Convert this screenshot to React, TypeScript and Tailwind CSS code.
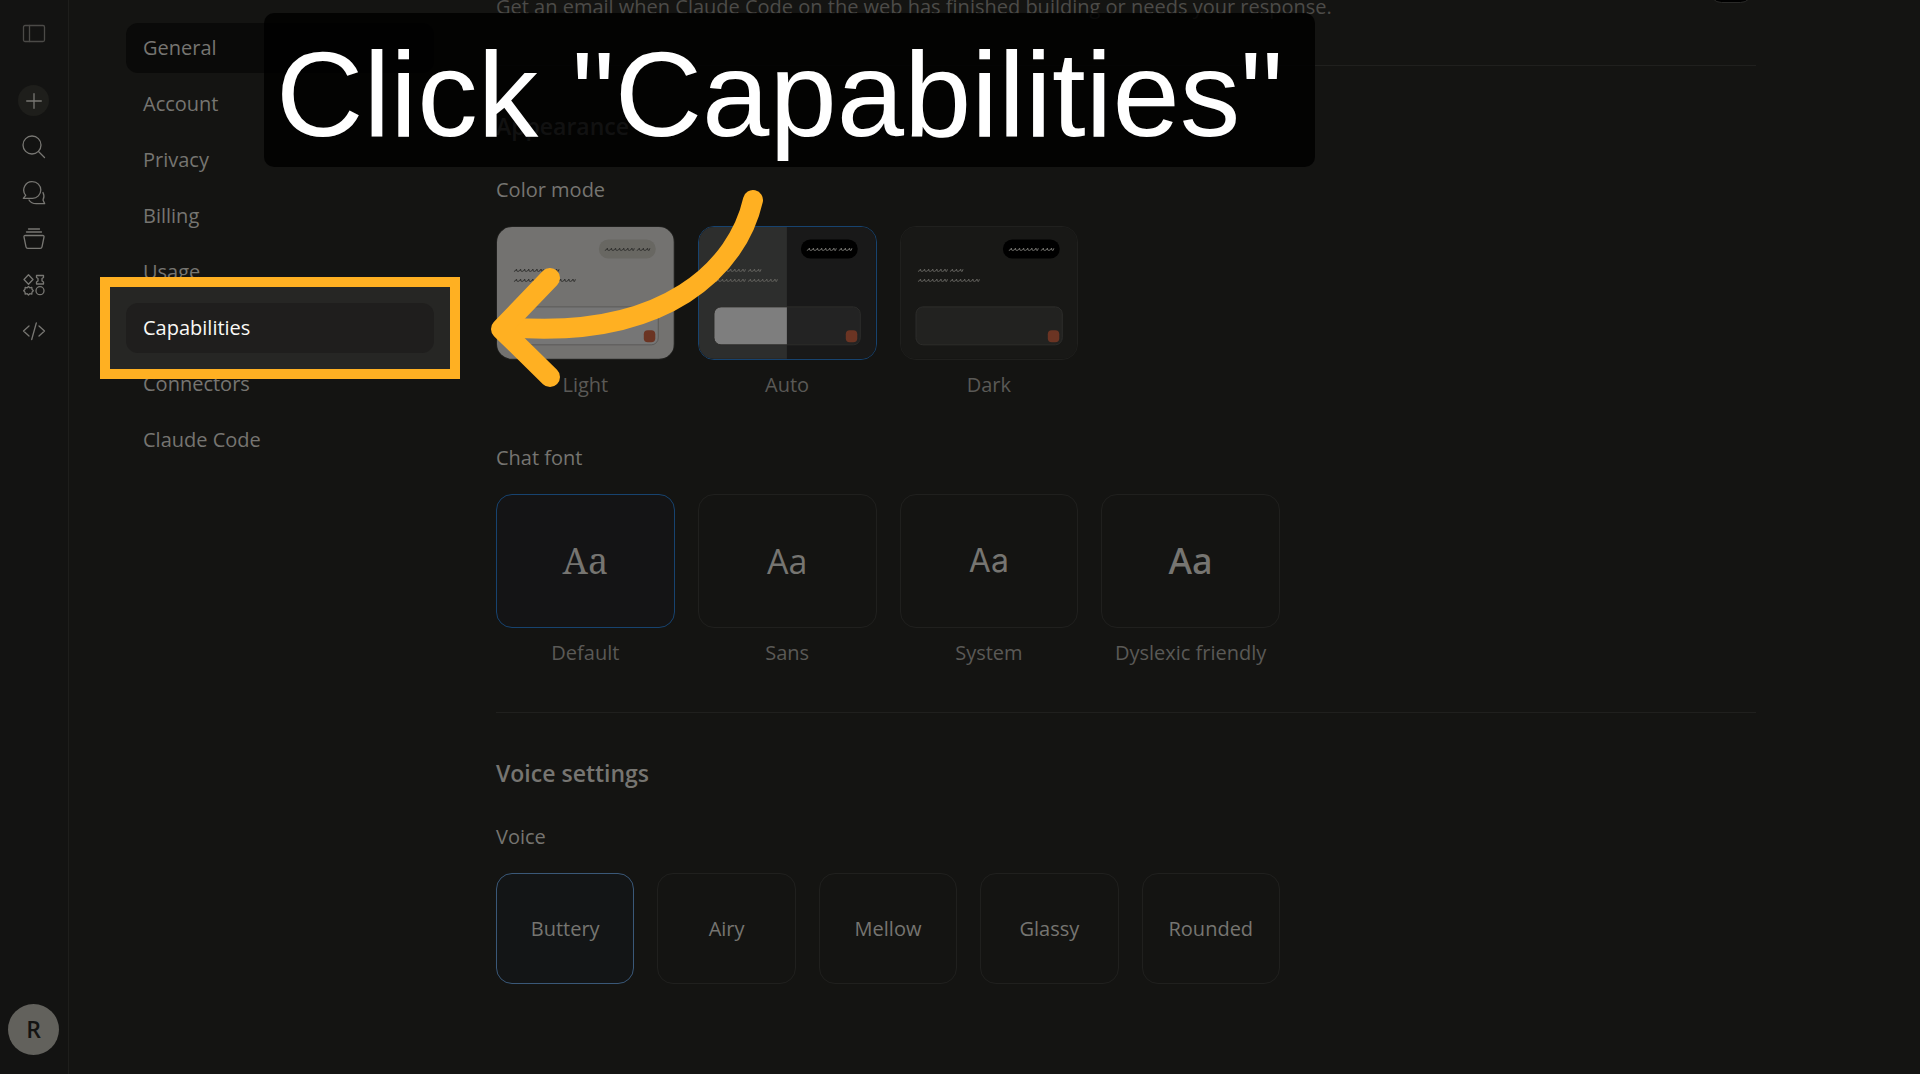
import { type ReactNode, useState } from 'react'

const NAV_ITEMS = ['General', 'Account', 'Privacy', 'Billing', 'Usage', 'Capabilities', 'Connectors', 'Claude Code']

const FONTS = [
  { label: 'Default', style: "font-['Noto_Serif','Liberation_Serif',serif] text-[36px]" },
  { label: 'Sans', style: "font-['Open_Sans',sans-serif] text-[34px] font-medium" },
  { label: 'System', style: "font-['Inter',sans-serif] text-[32px]" },
  { label: 'Dyslexic friendly', style: "font-['Noto_Sans',sans-serif] text-[36px] font-medium" },
]

const VOICES = ['Buttery', 'Airy', 'Mellow', 'Glassy', 'Rounded']

function Icon({ children, className = '' }: { children: ReactNode; className?: string }) {
  return (
    <svg
      viewBox="0 0 24 24"
      className={`size-6 ${className}`}
      fill="none"
      stroke="currentColor"
      strokeWidth="1.3"
      strokeLinecap="round"
      strokeLinejoin="round"
      aria-hidden="true"
    >
      {children}
    </svg>
  )
}

const RAIL_ITEMS = [
  {
    label: 'Search',
    icon: (
      <Icon>
        <circle cx="10" cy="10" r="9" />
        <path d="M16.5 16.5 L22.5 22.5" />
      </Icon>
    ),
  },
  {
    label: 'Chats',
    icon: (
      <Icon>
        <path d="M10.5.7a8.300 8.300 0 1 1 0 16.600H1.300l2.400-3A8.300 8.300 0 0 1 10.500.7z" />
        <path d="M21 11.500a8 8 0 0 1 0 7.500l1.700 3.700h-8.500c-3.200 0-5.700-1.200-7.200-3.700" />
      </Icon>
    ),
  },
  {
    label: 'Artifacts',
    icon: (
      <Icon>
        <path d="M6.500 2h11M4.500 5h15M3.300 8.500h17.400c1 0 1.500.6 1.300 1.500l-2 9.800c-.2 1-.8 1.500-1.800 1.500H5.800c-1 0-1.600-.5-1.800-1.500L2 10c-.2-.9.300-1.500 1.300-1.500z" />
      </Icon>
    ),
  },
  {
    label: 'Customize',
    icon: (
      <Icon>
        <path d="M6.500 1.800 11 6.500 6.500 11.200 2 6.500z" />
        <path d="M14.500 2.500h7v2l-1.500 1v2.500l1.500 1v2h-7V9l1.500-1V5.500l-1.500-1z" />
        <path d="M6.500 13.500l1.300 1.300 2-.5.200 2 1.300 1.400-1.300 1.400-.2 2-2-.4-1.300 1.300-1.300-1.300-2 .4-.2-2-1.300-1.400L3 16.300l.2-2 2 .5z" />
        <circle cx="18" cy="17.700" r="4" />
      </Icon>
    ),
  },
  {
    label: 'Code',
    icon: (
      <Icon>
        <path d="M7 7 1.500 12 7 17M17 7l5.500 5L17 17M14.300 4 9.700 20.500" />
      </Icon>
    ),
  },
]

function Rail() {
  return (
    <aside className="flex w-[69px] shrink-0 flex-col items-center border-r border-[#1e1e1c] bg-[#131312] pr-px text-[#787773]">
      <button aria-label="Toggle sidebar" className="mt-[22px] text-[#4b4a47]">
        <Icon>
          <rect x="1.500" y="3.500" width="21" height="16" rx="1.500" />
          <path d="M7.500 3.500v16" />
        </Icon>
      </button>
      <button aria-label="New chat" className="mt-[39px] mb-[8px] flex size-[31px] items-center justify-center rounded-full bg-[#1e1e1b]">
        <svg viewBox="0 0 16 16" className="size-4" stroke="currentColor" strokeWidth="1.300" strokeLinecap="round" aria-hidden="true">
          <path d="M8 .7v14.600M.7 8h14.600" />
        </svg>
      </button>
      {RAIL_ITEMS.map((item) => (
        <button key={item.label} aria-label={item.label} className="flex h-[46px] items-center">
          {item.icon}
        </button>
      ))}
      <button aria-label="Profile" className="mt-auto mb-[19px] flex size-[51px] items-center justify-center rounded-full bg-[#62615c] text-[23px] font-semibold text-[#131312]">
        R
      </button>
    </aside>
  )
}

function SettingsNav() {
  return (
    <nav className="w-[308px] shrink-0 pt-[23px]">
      <ul className="flex flex-col gap-[6px]">
        {NAV_ITEMS.map((item) => {
          const highlighted = item === 'Capabilities'
          return (
            <li key={item} className={highlighted ? 'relative z-10' : ''}>
              {highlighted && <div className="absolute -inset-[26px] border-10 border-[#ffb022] bg-[#262624]" />}
              <a
                href="#"
                className={`flex h-[50px] items-center rounded-xl px-[17px] ${
                  highlighted ? 'relative bg-[#1f1e1d] text-[#faf9f5]' : item === 'General' ? 'bg-[#0a0a09]' : ''
                }`}
              >
                {item}
              </a>
            </li>
          )
        })}
      </ul>
    </nav>
  )
}

// two words of scribbled placeholder text, long + short or long + long
function Squiggle({ x, y, long, color }: { x: number; y: number; long?: boolean; color: string }) {
  const wave = (start: number, n: number) =>
    `M${start} ${y + 1.500}` + Array.from({ length: n }, () => 'q1.600-.2 2.600-2.400q-.6 2.400 1.500 2.400').join('') + 'l.8-2.200'
  return <path d={wave(x, 7) + wave(x + 32, long ? 7 : 3)} stroke={color} strokeWidth="1" fill="none" />
}

function ModePreview({ mode }: { mode: string }) {
  const light = mode === 'Light'
  const auto = mode === 'Auto'
  const ink = light ? '#30302e' : '#62615d'
  return (
    <svg viewBox="0 0 177 132" className="block w-full" aria-hidden="true">
      <rect width="177" height="132" fill={light ? '#737270' : auto ? '#191919' : '#181816'} />
      {auto && <rect width="88" height="132" fill="#2d2e2d" />}
      <rect x="102" y="12.500" width="57" height="19" rx="9.500" fill={light ? '#686762' : '#000000'} />
      <Squiggle x={108} y={22} color={light ? '#30302e' : '#73726e'} />
      <Squiggle x={17} y={43} color={ink} />
      <Squiggle x={17} y={53} color={ink} long />
      <rect x="15" y="80" width="146.500" height="38" rx="7" fill={light ? '#767676' : auto ? '#232323' : '#222220'} />
      {auto && <path d="M88 80H22a7 7 0 0 0-7 7v24a7 7 0 0 0 7 7H88z" fill="#7e7e7e" />}
      <rect x="15" y="80" width="146.500" height="38" rx="7" fill="none" stroke={light ? '#5b5a58' : '#2d2d2b'} />
      <rect x="147" y="103.500" width="11.500" height="12" rx="4" fill="#6b3423" />
    </svg>
  )
}

type OptionProps = {
  group: string
  label: string
  checked: boolean
  onChange: () => void
  children: ReactNode
}

function CardOption({ group, label, checked, onChange, children }: OptionProps) {
  return (
    <label className="flex flex-col items-center">
      <input type="radio" name={group} className="sr-only" checked={checked} onChange={onChange} />
      <span
        className={`flex h-[134px] w-full items-center justify-center overflow-hidden rounded-2xl border ${
          checked ? 'border-[#17436f] bg-[#141415]' : 'border-[#20201e]'
        }`}
      >
        {children}
      </span>
      <span className="mt-[11px] leading-[28px] text-[#5a5956]">{label}</span>
    </label>
  )
}

function Settings() {
  const [mode, setMode] = useState('Auto')
  const [font, setFont] = useState('Default')
  const [voice, setVoice] = useState('Buttery')

  return (
    <main className="flex-1">
      <div className="flex h-[65px] items-start justify-between">
        <p className="-mt-[7px] leading-[28px] text-[#4c4b48]">
          Get an email when Claude Code on the web has finished building or needs your response.
        </p>
        <button role="switch" aria-checked="false" aria-label="Email notifications" className="-mt-[22px] mr-[3px] h-[25px] w-[44px] rounded-full border border-[#2a2a28] bg-black" />
      </div>
      <hr className="border-[#20201e]" />

      <section>
        <h2 className="mt-[44px] text-[23px] leading-[32px] font-semibold">Appearance</h2>

        <fieldset className="mt-[34px]">
          <legend className="leading-[28px]">Color mode</legend>
          <div className="mt-[22px] grid w-[784px] grid-cols-4 gap-[23px]">
            {['Light', 'Auto', 'Dark'].map((m) => (
              <CardOption key={m} group="mode" label={m} checked={mode === m} onChange={() => setMode(m)}>
                <ModePreview mode={m} />
              </CardOption>
            ))}
          </div>
        </fieldset>

        <fieldset className="mt-[45px]">
          <legend className="leading-[28px]">Chat font</legend>
          <div className="mt-[22px] grid w-[784px] grid-cols-4 gap-[23px]">
            {FONTS.map((f) => (
              <CardOption key={f.label} group="font" label={f.label} checked={font === f.label} onChange={() => setFont(f.label)}>
                <span className={f.style}>Aa</span>
              </CardOption>
            ))}
          </div>
        </fieldset>
      </section>

      <hr className="mt-[45px] border-[#20201e]" />

      <section>
        <h2 className="mt-[44px] text-[23px] leading-[32px] font-semibold">Voice settings</h2>
        <fieldset className="mt-[34px]">
          <legend className="leading-[28px]">Voice</legend>
          <div className="mt-[22px] grid w-[784px] grid-cols-5 gap-[23px]">
            {VOICES.map((v) => (
              <label
                key={v}
                className={`flex h-[111px] items-center justify-center rounded-2xl border ${
                  voice === v ? 'border-[#3a5878] bg-[#131516]' : 'border-[#20201e]'
                }`}
              >
                <input type="radio" name="voice" className="sr-only" checked={voice === v} onChange={() => setVoice(v)} />
                {v}
              </label>
            ))}
          </div>
        </fieldset>
      </section>
    </main>
  )
}

function Callout() {
  return (
    <div className="pointer-events-none absolute top-[13px] left-[264px] z-20">
      <div className="w-[1051px] rounded-[10px] bg-black/85 pt-2 pl-3 font-['Liberation_Sans',sans-serif] text-[121px] leading-[146px] whitespace-nowrap text-white">
        Click "Capabilities"
      </div>
      <svg viewBox="488 186 280 204" className="mt-[19px] ml-[224px] h-[204px] w-[280px]" fill="none" stroke="#ffb022" strokeWidth="20" strokeLinecap="round" strokeLinejoin="round" aria-hidden="true">
        <path d="M753 200C738 266 668 341 505 327" />
        <path d="M550 278 501 329 550 377" />
      </svg>
    </div>
  )
}

export default function App() {
  return (
    <div className="relative flex min-h-screen overflow-hidden bg-[#141412] font-['Open_Sans',sans-serif] text-[20px] text-[#767571]">
      <Rail />
      <div className="flex flex-1 gap-[62px] pr-[164px] pl-[57px]">
        <SettingsNav />
        <Settings />
      </div>
      <Callout />
    </div>
  )
}
